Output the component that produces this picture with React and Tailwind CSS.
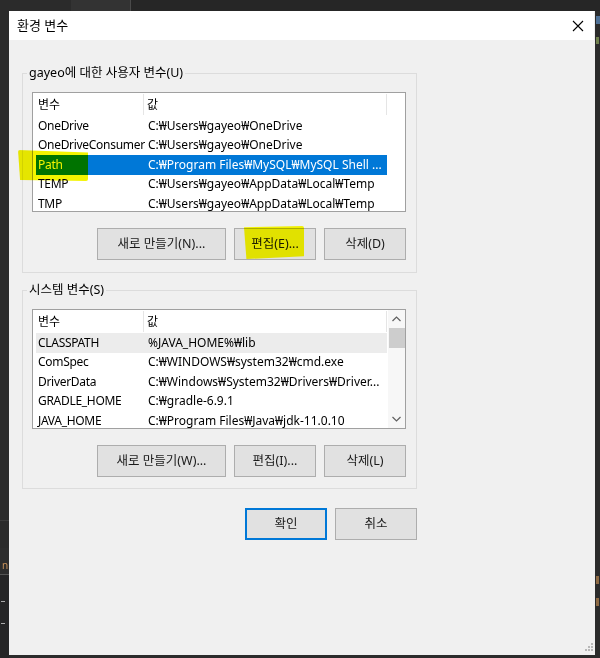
import React from 'react';

const W = '₩';

const userVars = [
  { name: 'OneDrive', value: `C:${W}Users${W}gayeo${W}OneDrive` },
  { name: 'OneDriveConsumer', value: `C:${W}Users${W}gayeo${W}OneDrive` },
  { name: 'Path', value: `C:${W}Program Files${W}MySQL${W}MySQL Shell ...`, selected: true },
  { name: 'TEMP', value: `C:${W}Users${W}gayeo${W}AppData${W}Local${W}Temp` },
  { name: 'TMP', value: `C:${W}Users${W}gayeo${W}AppData${W}Local${W}Temp` },
];

const systemVars = [
  { name: 'CLASSPATH', value: `%JAVA_HOME%${W}lib`, inactive: true },
  { name: 'ComSpec', value: `C:${W}WINDOWS${W}system32${W}cmd.exe` },
  { name: 'DriverData', value: `C:${W}Windows${W}System32${W}Drivers${W}Driver...` },
  { name: 'GRADLE_HOME', value: `C:${W}gradle-6.9.1` },
  { name: 'JAVA_HOME', value: `C:${W}Program Files${W}Java${W}jdk-11.0.10` },
];

const font = { fontFamily: '"Noto Sans", "Noto Sans CJK KR", sans-serif' };

function Row({ row }) {
  // 선택된 행은 파란색, 포커스 없는 선택은 옅은 회색
  let cls = 'text-black';
  if (row.selected) cls = 'bg-[#0078d7] text-white';
  if (row.inactive) cls = 'bg-[#ececec] text-black';
  return (
    <div className={`flex h-[19.5px] shrink-0 items-center w-[351px] ${cls}`}>
      <div className="w-[108px] shrink-0 pl-[2px] whitespace-nowrap tracking-[-0.3px]">{row.name}</div>
      <div className="flex-1 pl-[4px] whitespace-nowrap overflow-hidden">{row.value}</div>
    </div>
  );
}

function VarList({ rows, scroll }) {
  return (
    <div className="relative w-[374px] h-[120px] border border-[#a0a0a0] bg-white flex overflow-hidden">
      <div className="flex flex-col pl-[3px]">
        <div className="flex h-[23px] shrink-0 items-center w-[351px]">
          <div className="w-[108px] pl-[2px] h-[21px] flex items-center border-r border-[#e5e5e5]">변수</div>
          <div className="flex-1 pl-[3px] h-[21px] flex items-center border-r border-[#e5e5e5]">값</div>
        </div>
        {rows.map((r) => (
          <Row key={r.name} row={r} />
        ))}
      </div>
      {scroll && (
        <div className="ml-auto w-[17px] h-full bg-[#f7f7f7] flex flex-col items-center">
          <div className="h-[18px] flex items-center justify-center">
            <svg width="9" height="6" viewBox="0 0 9 6"><path d="M0.5 5 L4.5 1 L8.5 5" fill="none" stroke="#606060" strokeWidth="1.2" /></svg>
          </div>
          <div className="w-[16px] h-[20px] bg-[#cdcdcd]" />
          <div className="flex-1" />
          <div className="h-[18px] flex items-center justify-center">
            <svg width="9" height="6" viewBox="0 0 9 6"><path d="M0.5 1 L4.5 5 L8.5 1" fill="none" stroke="#606060" strokeWidth="1.2" /></svg>
          </div>
        </div>
      )}
    </div>
  );
}

function Btn({ children, w, primary }) {
  return (
    <div
      className={`h-[32px] flex items-center justify-center bg-[#e1e1e1] text-[#1a1a1a] text-[12.5px] ${w} ${
        primary ? 'border-2 border-[#0078d7]' : 'border border-[#adadad]'
      }`}
    >
      {children}
    </div>
  );
}

function Group({ label, rows, scroll, buttons, height }) {
  return (
    <div className={`relative w-[395px] ${height} border border-[#dcdcdc] pt-[18px] px-[9px]`}>
      <span className="absolute -top-[10px] left-[4px] bg-[#f0f0f0] px-[2px] leading-[18px] text-[12.5px]">{label}</span>
      <VarList rows={rows} scroll={scroll} />
      <div className="flex justify-end gap-[8px] mt-[16px] pr-[1px]">
        <Btn w="w-[129px]">{buttons[0]}</Btn>
        <Btn w="w-[82px]">{buttons[1]}</Btn>
        <Btn w="w-[82px]">{buttons[2]}</Btn>
      </div>
    </div>
  );
}

export default function App() {
  return (
    <div className="relative w-[600px] h-[658px] bg-[#2b2b2b] overflow-hidden text-[12px]" style={font}>
      {/* 뒤쪽 에디터 배경 */}
      <div className="absolute left-[71px] top-0 w-[60px] h-[11px] bg-[#333333] border-r border-[#4a4a4a]" />
      <div className="absolute left-[131px] top-0 right-0 h-[11px] bg-[#262626]" />
      <div className="absolute left-0 top-[520px] w-[9px] h-px bg-[#3c3c3c]" />
      <div className="absolute left-0 top-[548px] w-[9px] h-[26px] bg-[#2d2d2d]" />
      <div className="absolute left-0 top-[574px] w-[9px] h-[84px] bg-[#252526] border-t border-[#555]" />
      <div className="absolute left-[2px] top-[560px] text-[10px] text-[#c8925a] leading-none">n:</div>
      <div className="absolute left-[1px] top-[601px] w-[4px] h-px bg-[#aaa]" />
      <div className="absolute left-[1px] top-[623px] w-[4px] h-px bg-[#aaa]" />
      <div className="absolute left-[596px] top-[16px] w-[4px] h-[8px] bg-[#4f7196]" />
      <div className="absolute left-[596px] top-[37px] w-[3px] h-[7px] bg-[#6f7f4d]" />
      <div className="absolute left-[596px] top-[576px] w-[3px] h-[8px] bg-[#8d6a44]" />
      <div className="absolute left-[596px] top-[598px] w-[3px] h-[8px] bg-[#8d6a44]" />

      {/* 대화 상자 */}
      <div className="absolute left-[9px] top-[11px] w-[586px] h-[644px] bg-[#f0f0f0] flex flex-col">
        <div className="h-[29px] bg-white flex items-center pl-[8px] pr-[10px] mr-[1px]">
          <span className="text-[13px] text-black">환경 변수</span>
          <svg className="ml-auto" width="12" height="12" viewBox="0 0 12 12">
            <path d="M1 1 L11 11 M11 1 L1 11" stroke="#000" strokeWidth="1.1" />
          </svg>
        </div>
        <div className="flex flex-col pl-[13px] pt-[33px]">
          <Group
            label="gayeo에 대한 사용자 변수(U)"
            rows={userVars}
            buttons={['새로 만들기(N)...', '편집(E)...', '삭제(D)']}
            height="h-[200px]"
          />
          <div className="h-[17px]" />
          <Group
            label="시스템 변수(S)"
            rows={systemVars}
            scroll
            buttons={['새로 만들기(W)...', '편집(I)...', '삭제(L)']}
            height="h-[199px]"
          />
          <div className="flex justify-end gap-[8px] w-[395px] mt-[19px]">
            <Btn w="w-[82px]" primary>확인</Btn>
            <Btn w="w-[82px]">취소</Btn>
          </div>
        </div>
        <svg className="absolute right-[2px] bottom-[2px]" width="10" height="10" viewBox="0 0 10 10">
          <g fill="#b8b8b8">
            <rect x="8" y="0" width="2" height="2" />
            <rect x="5" y="3" width="2" height="2" />
            <rect x="8" y="3" width="2" height="2" />
            <rect x="2" y="6" width="2" height="2" />
            <rect x="5" y="6" width="2" height="2" />
            <rect x="8" y="6" width="2" height="2" />
          </g>
        </svg>
      </div>

      {/* 형광펜 표시 */}
      <div
        className="absolute left-[18px] top-[150px] w-[70px] h-[31px] bg-[#f4f400] mix-blend-multiply rounded-[2px]"
        style={{ clipPath: 'polygon(0 0, 100% 8%, 100% 100%, 3% 97%)' }}
      />
      <div
        className="absolute left-[244px] top-[226px] w-[60px] h-[33px] bg-[#ffff00] mix-blend-multiply rounded-[2px]"
        style={{ clipPath: 'polygon(0 4%, 100% 0, 100% 92%, 4% 100%)' }}
      />
    </div>
  );
}
